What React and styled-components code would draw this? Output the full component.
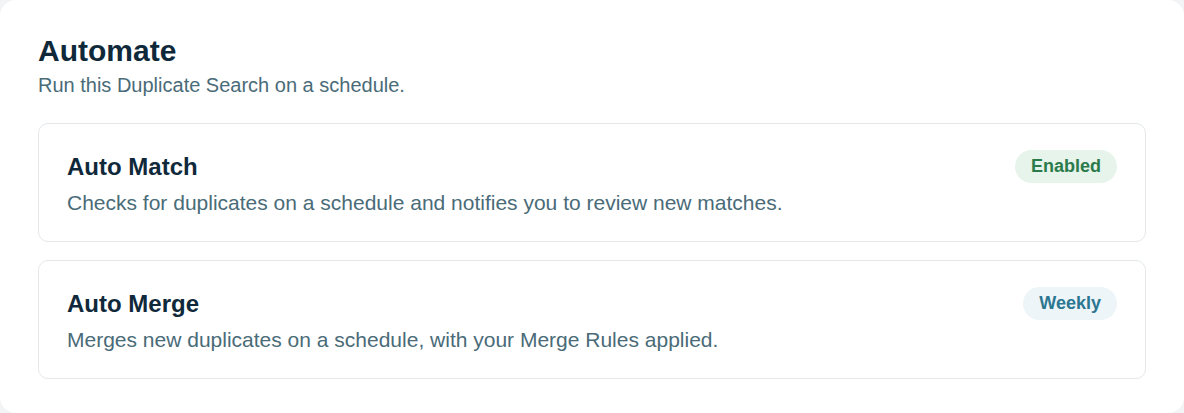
import styled, { createGlobalStyle } from 'styled-components';

const GlobalStyle = createGlobalStyle`
	html, body {
		margin: 0;
		padding: 0;
		background: #f3f4f6;
	}
	body {
		font-family: 'Liberation Sans', Arial, sans-serif;
	}
`;

const Panel = styled.section`
	box-sizing: border-box;
	width: 1184px;
	height: 413px;
	background: #fff;
	border-radius: 16px;
	padding: 33px 38px 0;
`;

const Heading = styled.h2`
	margin: 0;
	font-size: 30px;
	line-height: 36px;
	font-weight: 700;
	color: #10293a;
`;

const Subtitle = styled.p`
	margin: 1px 0 0;
	font-size: 20px;
	line-height: 30px;
	color: #4a6b78;
`;

const CardList = styled.div`
	display: flex;
	flex-direction: column;
	gap: 18px;
	margin-top: 23px;
`;

const Card = styled.div`
	border: 1px solid #e4e8eb;
	border-radius: 10px;
	padding: 26px 28px 23px;
`;

const CardHeader = styled.div`
	display: flex;
	align-items: center;
	justify-content: space-between;
	height: 33px;
`;

const CardTitle = styled.h3`
	margin: 0;
	font-size: 24px;
	line-height: 30px;
	font-weight: 700;
	color: #10293a;
`;

const CardText = styled.p`
	margin: 4px 0 0;
	font-size: 21px;
	line-height: 31px;
	color: #4a6b78;
`;

const tones = {
	green: { bg: '#e7f4eb', fg: '#2b7a4b' },
	blue: { bg: '#edf5f9', fg: '#2b7690' },
};

const Badge = styled.span`
	display: inline-flex;
	align-items: center;
	height: 33px;
	padding: 0 16px;
	border-radius: 999px;
	font-size: 18px;
	font-weight: 700;
	background: ${(p) => tones[p.$tone].bg};
	color: ${(p) => tones[p.$tone].fg};
`;

const automations = [
	{
		title: 'Auto Match',
		text: 'Checks for duplicates on a schedule and notifies you to review new matches.',
		badge: 'Enabled',
		tone: 'green',
	},
	{
		title: 'Auto Merge',
		text: 'Merges new duplicates on a schedule, with your Merge Rules applied.',
		badge: 'Weekly',
		tone: 'blue',
	},
];

const App = () => {
	return (
		<>
			<GlobalStyle />
			<Panel>
				<Heading>Automate</Heading>
				<Subtitle>Run this Duplicate Search on a schedule.</Subtitle>
				<CardList>
					{automations.map((a) => (
						<Card key={a.title}>
							<CardHeader>
								<CardTitle>{a.title}</CardTitle>
								<Badge $tone={a.tone}>{a.badge}</Badge>
							</CardHeader>
							<CardText>{a.text}</CardText>
						</Card>
					))}
				</CardList>
			</Panel>
		</>
	);
};

export default App;
